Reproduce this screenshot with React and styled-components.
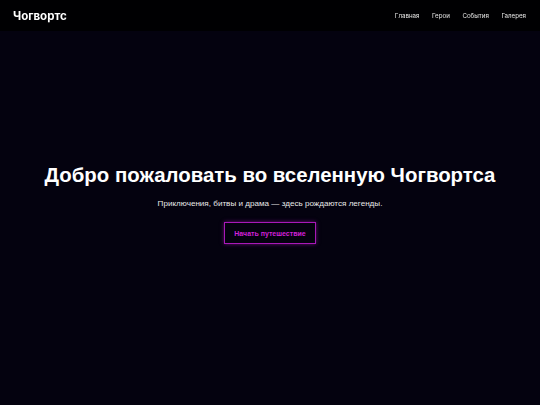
import React from "react";
import styled, { createGlobalStyle } from "styled-components";

const navLinks = ["Главная", "Герои", "События", "Галерея"];

function App() {
  return (
    <Page>
      <GlobalStyle />
      <Header>
        <Logo>Чогвортс</Logo>
        <Nav>
          {navLinks.map((label) => (
            <NavLink key={label} href="#">
              {label}
            </NavLink>
          ))}
        </Nav>
      </Header>
      <Hero>
        <Title>Добро пожаловать во вселенную Чогвортса</Title>
        <Subtitle>Приключения, битвы и драма — здесь рождаются легенды.</Subtitle>
        <CtaButton>Начать путешествие</CtaButton>
      </Hero>
    </Page>
  );
}

const GlobalStyle = createGlobalStyle`
  * { box-sizing: border-box; }
  body {
    margin: 0;
    background: #04020f;
    color: #fff;
    font-family: "Liberation Sans", Arial, sans-serif;
  }
`;

const Page = styled.div`
  min-height: 100vh;
`;

const Header = styled.header`
  position: fixed;
  top: 0;
  left: 0;
  right: 0;
  height: 31px;
  padding: 0 14px 0 13px;
  display: flex;
  align-items: center;
  justify-content: space-between;
  background: rgba(0, 0, 0, 0.85);
  z-index: 10;
`;

const Logo = styled.div`
  font-family: Inter, "Liberation Sans", sans-serif;
  font-size: 11.5px;
  font-weight: 700;
  color: #fff;
`;

const Nav = styled.nav`
  display: flex;
  gap: 12.5px;
`;

const NavLink = styled.a`
  font-family: Inter, "Liberation Sans", sans-serif;
  font-size: 6.2px;
  color: #e6e6e6;
  text-decoration: none;
`;

const Hero = styled.section`
  height: 100vh;
  display: flex;
  flex-direction: column;
  align-items: center;
  justify-content: center;
  text-align: center;
`;

const Title = styled.h1`
  margin: 3px 0 12px;
  font-size: 20.4px;
  font-weight: 700;
  color: #fff;
`;

const Subtitle = styled.p`
  margin: 0 0 14px;
  font-size: 8.1px;
  color: #e8e8e8;
`;

const CtaButton = styled.button`
  width: 92px;
  height: 22px;
  padding: 0;
  background: transparent;
  border: 1px solid #a818b8;
  box-shadow: 0 0 4px rgba(200, 30, 220, 0.5);
  color: #d020d8;
  font-family: "Liberation Sans", Arial, sans-serif;
  font-size: 7px;
  font-weight: 700;
  cursor: pointer;
`;

export default App;
